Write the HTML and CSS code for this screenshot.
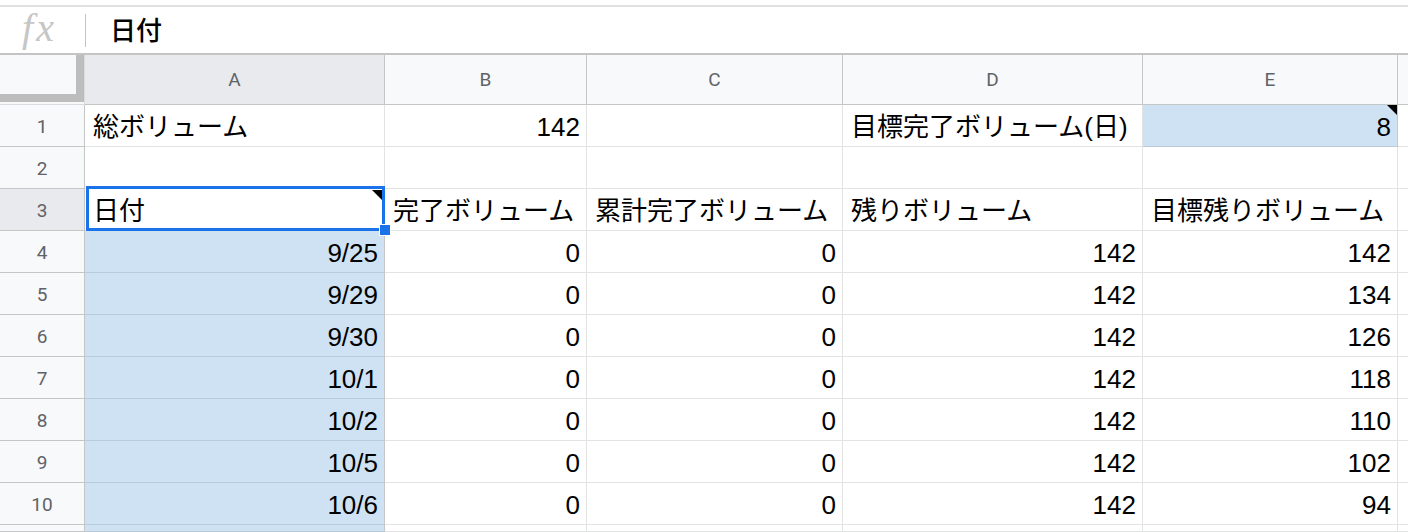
FILE: index.html
```html
<!DOCTYPE html>
<html lang="ja">
<head>
<meta charset="utf-8">
<title>Sheet</title>
<link rel="stylesheet" href="styles.css">
</head>
<body>
<div class="topgap"></div>
<div class="fbar">
  <div class="fx">fx</div>
  <div class="sep"></div>
  <div class="ftext">日付</div>
</div>
<div class="sheet">
  <div class="h corner"><div class="freeze"></div></div>
  <div class="h sel">A</div>
  <div class="h">B</div>
  <div class="h">C</div>
  <div class="h">D</div>
  <div class="h">E</div>
  <div class="h"></div>

  <div class="rh">1</div>
  <div class="c">総ボリューム</div>
  <div class="c r">142</div>
  <div class="c"></div>
  <div class="c">目標完了ボリューム(日)</div>
  <div class="c r blue note">8</div>
  <div class="c"></div>

  <div class="rh">2</div>
  <div class="c"></div>
  <div class="c"></div>
  <div class="c"></div>
  <div class="c"></div>
  <div class="c"></div>
  <div class="c"></div>

  <div class="rh sel">3</div>
  <div class="c active note">日付<span class="handle"></span></div>
  <div class="c">完了ボリューム</div>
  <div class="c">累計完了ボリューム</div>
  <div class="c">残りボリューム</div>
  <div class="c">目標残りボリューム</div>
  <div class="c"></div>

  <div class="rh">4</div>
  <div class="c r blue acol">9/25</div>
  <div class="c r">0</div>
  <div class="c r">0</div>
  <div class="c r">142</div>
  <div class="c r">142</div>
  <div class="c"></div>

  <div class="rh">5</div>
  <div class="c r blue acol">9/29</div>
  <div class="c r">0</div>
  <div class="c r">0</div>
  <div class="c r">142</div>
  <div class="c r">134</div>
  <div class="c"></div>

  <div class="rh">6</div>
  <div class="c r blue acol">9/30</div>
  <div class="c r">0</div>
  <div class="c r">0</div>
  <div class="c r">142</div>
  <div class="c r">126</div>
  <div class="c"></div>

  <div class="rh">7</div>
  <div class="c r blue acol">10/1</div>
  <div class="c r">0</div>
  <div class="c r">0</div>
  <div class="c r">142</div>
  <div class="c r">118</div>
  <div class="c"></div>

  <div class="rh">8</div>
  <div class="c r blue acol">10/2</div>
  <div class="c r">0</div>
  <div class="c r">0</div>
  <div class="c r">142</div>
  <div class="c r">110</div>
  <div class="c"></div>

  <div class="rh">9</div>
  <div class="c r blue acol">10/5</div>
  <div class="c r">0</div>
  <div class="c r">0</div>
  <div class="c r">142</div>
  <div class="c r">102</div>
  <div class="c"></div>

  <div class="rh">10</div>
  <div class="c r blue acol">10/6</div>
  <div class="c r">0</div>
  <div class="c r">0</div>
  <div class="c r">142</div>
  <div class="c r">94</div>
  <div class="c"></div>

  <div class="rh"></div>
  <div class="c r blue acol"></div>
  <div class="c"></div>
  <div class="c"></div>
  <div class="c"></div>
  <div class="c"></div>
  <div class="c"></div>
</div>
</body>
</html>
```

FILE: styles.css
```css
html, body {
  margin: 0;
  padding: 0;
  background: #ffffff;
  overflow: hidden;
  height: 532px;
}

.topgap {
  height: 5px;
}

.fbar {
  display: flex;
  align-items: center;
  height: 46px;
  border-top: 2px solid #e1e1e1;
  border-bottom: 2px solid #c4c4c4;
}

.fx {
  width: 85px;
  text-align: center;
  font-family: "Liberation Serif", serif;
  font-style: italic;
  font-size: 40px;
  letter-spacing: 3px;
  color: #c6c6c6;
  line-height: 40px;
  padding-right: 6px;
  padding-bottom: 4px;
  box-sizing: border-box;
}

.sep {
  width: 1px;
  height: 33px;
  background: #c4c4c4;
}

.ftext {
  margin-left: 24px;
  padding-bottom: 4px;
  font-family: "Liberation Sans", "Noto Sans CJK JP", sans-serif;
  font-size: 26px;
  font-weight: 500;
  color: #000;
}

.sheet {
  display: grid;
  grid-template-columns: 85px 300px 202px 256px 300px 255px 1fr;
  grid-template-rows: 50px repeat(10, 42px) 7px;
}

.sheet > div {
  box-sizing: border-box;
  min-width: 0;
}

.h {
  background: #f8f9fa;
  border-right: 1px solid #c4c7c5;
  border-bottom: 1px solid #c4c7c5;
  display: flex;
  align-items: center;
  justify-content: center;
  font-family: Roboto, "Liberation Sans", sans-serif;
  font-size: 19px;
  color: #5f6368;
}

.h.sel, .rh.sel {
  background: #e8eaed;
}

.corner {
  align-items: flex-start;
  justify-content: flex-start;
  border-right-color: #dadce0;
  border-bottom-color: #dadce0;
}

.freeze {
  width: 84px;
  height: 47px;
  box-sizing: border-box;
  border-right: 8px solid #bdbdbd;
  border-bottom: 8px solid #bdbdbd;
}

.rh {
  background: #f8f9fa;
  border-right: 1px solid #c4c7c5;
  border-bottom: 1px solid #c4c7c5;
  display: flex;
  align-items: center;
  justify-content: center;
  font-family: Roboto, "Liberation Sans", sans-serif;
  font-size: 19px;
  color: #5f6368;
  padding-top: 2px;
}

.c {
  border-right: 1px solid #e2e3e3;
  border-bottom: 1px solid #e2e3e3;
  display: flex;
  align-items: center;
  padding: 2px 7px 0 8px;
  font-family: "Liberation Sans", "Noto Sans CJK JP", sans-serif;
  font-size: 26px;
  line-height: 30px;
  color: #000;
  white-space: nowrap;
  position: relative;
}

.c.r {
  justify-content: flex-end;
  padding-right: 6px;
}

.blue {
  background: #cfe2f3;
  border-bottom-color: #b9cad9;
  border-right-color: #b9cad9;
}

.acol {
  border-right-color: #c4c7c5;
}

.note::before {
  content: "";
  position: absolute;
  top: 0;
  right: 0;
  width: 0;
  height: 0;
  border-top: 10px solid #000;
  border-left: 10px solid transparent;
}

.active::before {
  top: 1px;
  right: 2px;
}

.active::after {
  content: "";
  position: absolute;
  left: 1px;
  top: -3px;
  right: -1px;
  bottom: -1px;
  border: 3px solid #1a73e8;
  pointer-events: none;
}

.handle {
  position: absolute;
  right: -7px;
  bottom: -6px;
  width: 10px;
  height: 10px;
  background: #1a73e8;
  border: 1px solid #ffffff;
  z-index: 3;
}
```
